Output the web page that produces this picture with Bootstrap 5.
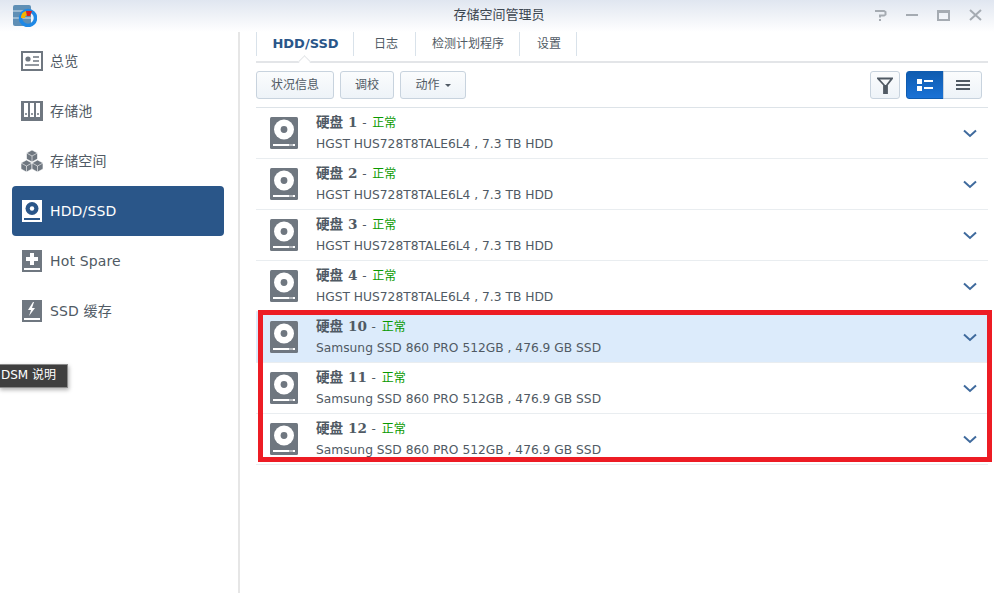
<!DOCTYPE html>
<html lang="zh">
<head>
  <meta charset="UTF-8" />
  <meta name="viewport" content="width=device-width, initial-scale=1.0"/>
  <title>存储空间管理员</title>
  <link href="https://cdn.jsdelivr.net/npm/bootstrap@5.3.2/dist/css/bootstrap.min.css" rel="stylesheet">
  <style>
    html, body { height: 100%; }
    body { font-family: "DejaVu Sans", "Noto Sans CJK SC", sans-serif; font-size: 13px; color: #505a64; overflow: hidden; background: #fff; position: relative; }
    .win-bar { height: 32px; background: linear-gradient(#e0e6f0, #fff); padding: 5px 12px 0 13px; }
    .win-title { position: absolute; left: 4px; right: 0; top: 6px; text-align: center; color: #3c4650; font-size: 13px; line-height: 17px; }
    .win-ctrls { margin-left: auto; gap: 19px; padding-top: 4px; }
    .side-nav { width: 240px; padding: 4px 14px 0 12px; border-right: 2px solid #e6e6e6; flex: none; }
    .side-link { height: 50px; padding: 0 0 0 9px; gap: 7px; border-radius: 4px; color: #505a64; font-size: 14px; letter-spacing: .15px; }
    .side-link:hover { color: #505a64; }
    .side-link.active { background: #2a5689; color: #fff; }
    .side-link.active:hover { color: #fff; }
    .side-ic { width: 22px; height: 22px; flex: none; }
    .main-pane { padding-left: 16px; padding-right: 6px; position: relative; min-width: 0; }
    .tab-bar { height: 31px; border-bottom: 2px solid #e3e5e8; flex-wrap: nowrap; position: relative; }
    .tab-item { height: 24px; padding: 0; border-right: 1px solid #d9e2ea; color: #505a64; font-size: 12px; text-align: center; line-height: 24px; text-decoration: none; }
    .tab-item:hover { color: #505a64; }
    .tab-first { width: 98px; padding-left: 1px; border-left: 1px solid #d9e2ea; color: #2a5689; font-weight: 700; font-size: 13px; }
    .tab-first:hover { color: #2a5689; }
    .tab-w2 { width: 62px; padding-left: 3px; }
    .tab-w3 { width: 104px; padding-left: 1px; }
    .tab-w4 { width: 57px; padding-left: 2px; }
    .tab-notch { position: absolute; left: 44px; top: 25px; width: 9px; height: 9px; background: #fff; border-left: 1px solid #e3e5e8; border-top: 1px solid #e3e5e8; transform: rotate(45deg); }
    .tool-bar { padding: 8px 6px 8px 0; height: 45px; border-bottom: 1px solid #dde3e8; gap: 6px; }
    .tool-btn { height: 28px; padding: 0; font-size: 12px; line-height: 26px; color: #505a64; background: linear-gradient(#fbfcfd, #eef3f8); border: 1px solid #c8d3de; border-radius: 3px; }
    .tool-btn:hover { color: #505a64; border-color: #c8d3de; }
    .tool-w78 { width: 78px; }
    .tool-w54 { width: 54px; }
    .tool-w66 { width: 66px; }
    .tool-w30 { width: 30px; }
    .tool-w38 { width: 38px; }
    .tool-w39 { width: 39px; }
    .tool-on, .tool-on:hover { background: linear-gradient(#0f5cb0, #1a72d6); border-color: #0f5cb0; }
    .caret-dn { display: inline-block; width: 0; height: 0; margin-left: 5px; vertical-align: 2px; border: 3px solid transparent; border-top: 3px solid #505a64; border-bottom: 0; }
    .disk-row { height: 51px; padding: 0 11px 0 14px; gap: 18px; border-bottom: 1px solid #e9edf0; border-left: 0; border-right: 0; border-top: 0; border-radius: 0 !important; color: #505a64; font-size: 12.25px; background: transparent; }
    .list-group-flush > .disk-row:last-child { border-bottom-width: 1px; }
    .disk-sel { background: #dcebfb; }
    .disk-ic { width: 28px; height: 32px; flex: none; }
    .disk-name { font-family: "DejaVu Serif", "Noto Sans CJK SC", serif; font-weight: 700; font-size: 13.6px; line-height: 20px; color: #505a64; }
    .disk-state { font-family: "DejaVu Sans", "Noto Sans CJK SC", sans-serif; font-weight: 400; font-size: 12px; color: #0a9a00; margin-left: 1px; }
    .disk-dash { font-family: "DejaVu Sans", sans-serif; font-weight: 400; font-size: 12px; }
    .disk-model { line-height: 20px; margin-top: 1px; }
    .chev { margin-left: auto; width: 14px; height: 9px; flex: none; }
    .red-box { position: absolute; left: 258px; top: 310px; width: 734px; height: 152px; border: 5px solid #ed1c24; pointer-events: none; }
    .dsm-tip { position: absolute; left: -1px; top: 364px; width: 69px; height: 24px; background: #3f3f3f; border: 1px solid #8a8a8a; box-shadow: 1px 2px 4px rgba(0,0,0,.3); color: #fff; font-size: 12px; line-height: 21px; padding-left: 1px; }
  </style>
</head>
<body>

  <svg width="0" height="0" class="position-absolute">
    <symbol id="disk" viewBox="0 0 28 32">
      <rect width="28" height="32" rx="1.5" fill="#6f7780"/>
      <circle cx="14" cy="12.5" r="10" fill="#fff"/>
      <circle cx="14" cy="12.5" r="3.4" fill="#6f7780"/>
      <rect x="3" y="27" width="22" height="2" fill="#fff"/>
      <rect x="19" y="27.5" width="4" height="1" fill="#6f7780"/>
    </symbol>
    <symbol id="chev" viewBox="0 0 14 9">
      <path d="M1 1.5 7 7l6-5.5" fill="none" stroke="#3f6a9d" stroke-width="2"/>
    </symbol>
  </svg>

  <div class="win-bar d-flex">
    <svg width="24" height="22" viewBox="0 0 24 22">
      <rect x="0" y="0" width="18" height="21" rx="2" fill="#5f8fb5"/>
      <path d="M0 6h18M0 13h18" stroke="#d7e3ec" stroke-width="1"/>
      <circle cx="15" cy="13" r="7.5" fill="none" stroke="#1e88e5" stroke-width="3.5"/>
      <path d="M8 13a7 7 0 0 1 5-7l1 4a3 3 0 0 0-2 3z" fill="#f5b400"/>
      <path d="M13 6h6l-2 5h-3z" fill="#e02020"/>
    </svg>
    <div class="win-title">存储空间管理员</div>
    <div class="win-ctrls d-flex align-items-start">
      <svg width="12" height="12" viewBox="0 0 12 12"><path d="M0 2h9l1.500 1v2.500l-1.500 1H5v2M5 10v2" fill="none" stroke="#a5abb2" stroke-width="2"/></svg>
      <svg width="12" height="12" viewBox="0 0 12 12"><path d="M0 6h12" stroke="#a5abb2" stroke-width="2"/></svg>
      <svg width="13" height="12" viewBox="0 0 13 12"><path d="M1 2h11v9H1z" fill="none" stroke="#a5abb2" stroke-width="2"/><path d="M1 3h11" stroke="#a5abb2" stroke-width="2"/></svg>
      <svg width="13" height="12" viewBox="0 0 13 12"><path d="m1 1 11 10M12 1 1 11" stroke="#a5abb2" stroke-width="2"/></svg>
    </div>
  </div>

  <div class="d-flex" style="height: 561px">
    <nav class="side-nav nav flex-column">
      <a class="side-link nav-link d-flex align-items-center" href="#">
        <svg class="side-ic" viewBox="0 0 22 22"><rect x="0" y="1" width="22" height="20" fill="#6f7780"/><rect x="2" y="3" width="18" height="16" fill="#fff"/><circle cx="7" cy="9" r="2.600" fill="#6f7780"/><path d="M12 7h6M12 11h6M4 15h14" stroke="#6f7780" stroke-width="1.600"/></svg>
        总览
      </a>
      <a class="side-link nav-link d-flex align-items-center" href="#">
        <svg class="side-ic" viewBox="0 0 22 22"><rect x="0" y="1" width="22" height="20" fill="#6f7780"/><path d="M3 3h4v14H3zM9 3h4v14H9zM15 3h4v14h-4z" fill="#fff"/><path d="M5 13v2M11 13v2M17 13v2" stroke="#6f7780" stroke-width="1.500"/></svg>
        存储池
      </a>
      <a class="side-link nav-link d-flex align-items-center" href="#">
        <svg class="side-ic" viewBox="0 0 22 22"><g fill="#6f7780" stroke="#fff" stroke-width=".6"><path d="M11 0l5.500 3v6L11 12 5.500 9V3z"/><path d="M5.500 10 11 13v6l-5.500 3L0 19v-6z"/><path d="M16.500 10 22 13v6l-5.500 3-5.500-3v-6z"/></g><path d="M5.500 3 11 6l5.500-3M11 6v6M0 13l5.500 3L11 13M5.500 16v6M11 13l5.500 3L22 13M16.500 16v6" fill="none" stroke="#fff" stroke-width=".6"/></svg>
        存储空间
      </a>
      <a class="side-link nav-link active d-flex align-items-center" href="#">
        <svg class="side-ic" viewBox="0 0 22 22"><rect width="20" height="22" x="1" fill="#fff"/><circle cx="11" cy="8.500" r="6.500" fill="#2a5689"/><circle cx="11" cy="8.500" r="2.200" fill="#fff"/><rect x="3" y="18" width="16" height="2" fill="#2a5689"/></svg>
        HDD/SSD
      </a>
      <a class="side-link nav-link d-flex align-items-center" href="#">
        <svg class="side-ic" viewBox="0 0 22 22"><rect width="20" height="22" x="1" fill="#6f7780"/><path d="M9 3h4v4h4v4h-4v4H9v-4H5V7h4z" fill="#fff"/><rect x="3" y="18" width="16" height="2" fill="#fff"/></svg>
        Hot Spare
      </a>
      <a class="side-link nav-link d-flex align-items-center" href="#">
        <svg class="side-ic" viewBox="0 0 22 22"><rect width="20" height="22" x="1" fill="#6f7780"/><path d="M12 2 7 10h3l-2 6 6-8h-3l2-6z" fill="#fff"/><rect x="3" y="18" width="16" height="2" fill="#fff"/></svg>
        SSD 缓存
      </a>
    </nav>

    <div class="main-pane flex-grow-1">
      <div class="tab-bar nav">
        <a class="tab-item tab-first" href="#">HDD/SSD</a>
        <a class="tab-item tab-w2" href="#">日志</a>
        <a class="tab-item tab-w3" href="#">检测计划程序</a>
        <a class="tab-item tab-w4" href="#">设置</a>
        <span class="tab-notch"></span>
      </div>

      <div class="tool-bar d-flex">
        <button class="btn tool-btn tool-w78" type="button">状况信息</button>
        <button class="btn tool-btn tool-w54" type="button">调校</button>
        <button class="btn tool-btn tool-w66" type="button">动作<span class="caret-dn"></span></button>
        <button class="btn tool-btn tool-w30 ms-auto d-flex align-items-center justify-content-center" type="button">
          <svg width="16" height="17" viewBox="0 0 16 17"><path d="M1 1.500h14L10 8v8.500H7V8z" fill="none" stroke="#505a64" stroke-width="1.800"/><path d="M7 8h3v9H7z" fill="#505a64"/></svg>
        </button>
        <div class="btn-group">
          <button class="btn tool-btn tool-w38 tool-on d-flex align-items-center justify-content-center" type="button">
            <svg width="16" height="12" viewBox="0 0 16 12" fill="#fff"><rect width="5" height="5"/><rect y="7" width="5" height="5"/><rect x="7" y="1" width="9" height="2"/><rect x="7" y="8" width="9" height="2"/></svg>
          </button>
          <button class="btn tool-btn tool-w39 d-flex align-items-center justify-content-center" type="button">
            <svg width="14" height="10" viewBox="0 0 14 10" fill="#505a64"><rect width="14" height="2"/><rect y="4" width="14" height="2"/><rect y="8" width="14" height="2"/></svg>
          </button>
        </div>
      </div>

      <div class="list-group list-group-flush">
        <div class="list-group-item disk-row d-flex align-items-center"><svg class="disk-ic"><use href="#disk"/></svg><div><div class="disk-name">硬盘 1 <span class="disk-dash">-</span> <span class="disk-state">正常</span></div><div class="disk-model">HGST HUS728T8TALE6L4 , 7.3 TB HDD</div></div><svg class="chev"><use href="#chev"/></svg></div>
        <div class="list-group-item disk-row d-flex align-items-center"><svg class="disk-ic"><use href="#disk"/></svg><div><div class="disk-name">硬盘 2 <span class="disk-dash">-</span> <span class="disk-state">正常</span></div><div class="disk-model">HGST HUS728T8TALE6L4 , 7.3 TB HDD</div></div><svg class="chev"><use href="#chev"/></svg></div>
        <div class="list-group-item disk-row d-flex align-items-center"><svg class="disk-ic"><use href="#disk"/></svg><div><div class="disk-name">硬盘 3 <span class="disk-dash">-</span> <span class="disk-state">正常</span></div><div class="disk-model">HGST HUS728T8TALE6L4 , 7.3 TB HDD</div></div><svg class="chev"><use href="#chev"/></svg></div>
        <div class="list-group-item disk-row d-flex align-items-center"><svg class="disk-ic"><use href="#disk"/></svg><div><div class="disk-name">硬盘 4 <span class="disk-dash">-</span> <span class="disk-state">正常</span></div><div class="disk-model">HGST HUS728T8TALE6L4 , 7.3 TB HDD</div></div><svg class="chev"><use href="#chev"/></svg></div>
        <div class="list-group-item disk-row disk-sel d-flex align-items-center"><svg class="disk-ic"><use href="#disk"/></svg><div><div class="disk-name">硬盘 10 <span class="disk-dash">-</span> <span class="disk-state">正常</span></div><div class="disk-model">Samsung SSD 860 PRO 512GB , 476.9 GB SSD</div></div><svg class="chev"><use href="#chev"/></svg></div>
        <div class="list-group-item disk-row d-flex align-items-center"><svg class="disk-ic"><use href="#disk"/></svg><div><div class="disk-name">硬盘 11 <span class="disk-dash">-</span> <span class="disk-state">正常</span></div><div class="disk-model">Samsung SSD 860 PRO 512GB , 476.9 GB SSD</div></div><svg class="chev"><use href="#chev"/></svg></div>
        <div class="list-group-item disk-row d-flex align-items-center"><svg class="disk-ic"><use href="#disk"/></svg><div><div class="disk-name">硬盘 12 <span class="disk-dash">-</span> <span class="disk-state">正常</span></div><div class="disk-model">Samsung SSD 860 PRO 512GB , 476.9 GB SSD</div></div><svg class="chev"><use href="#chev"/></svg></div>
      </div>
    </div>
  </div>

  <div class="dsm-tip">DSM 说明</div>
  <div class="red-box"></div>

  <script src="https://cdn.jsdelivr.net/npm/bootstrap@5.3.2/dist/js/bootstrap.bundle.min.js"></script>
</body>
</html>
